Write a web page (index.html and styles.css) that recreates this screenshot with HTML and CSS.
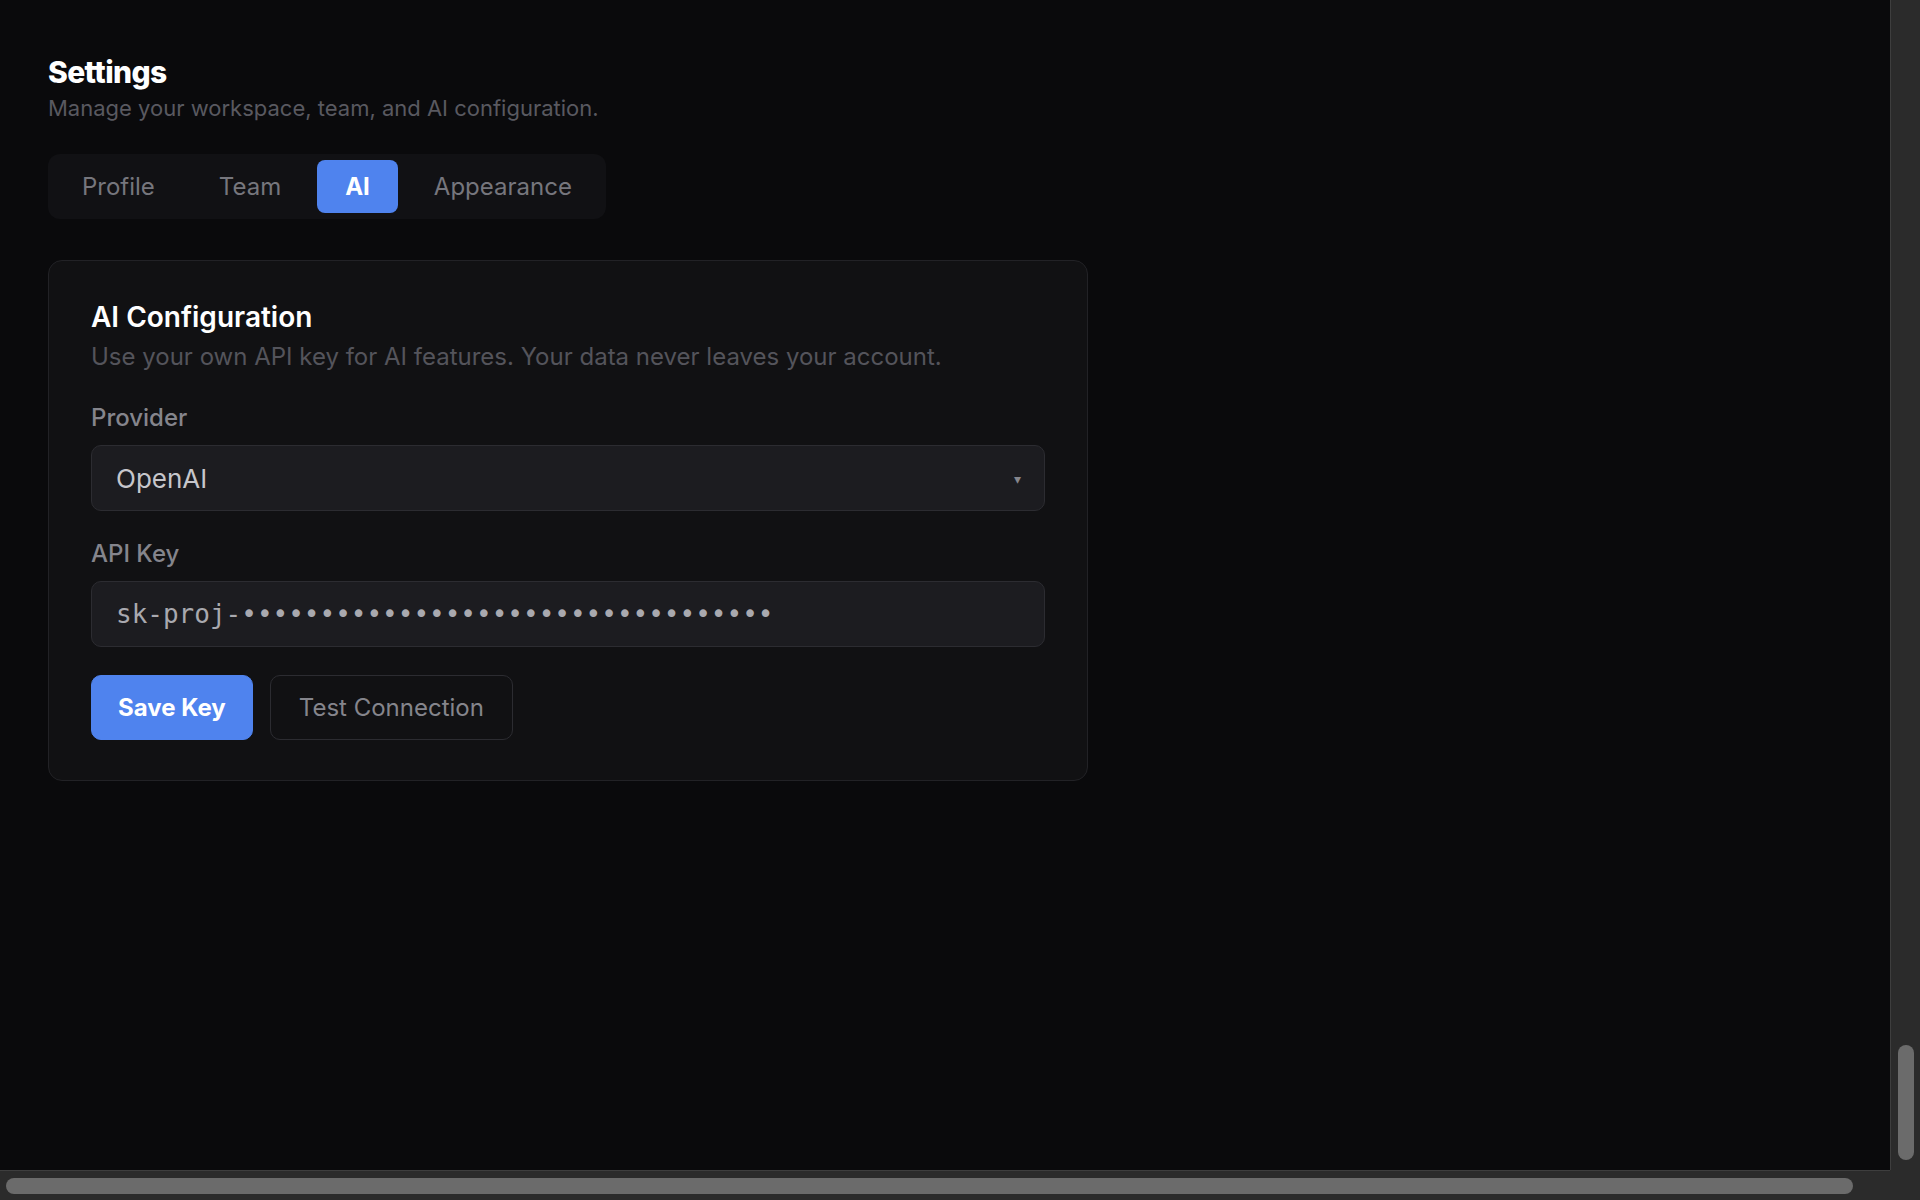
FILE: index.html
```html
<!DOCTYPE html>
<html lang="en">
<head>
    <meta charset="utf-8">
    <title>Settings</title>
    <link rel="stylesheet" href="styles.css">
</head>
<body>
    <div class="window">
        <main class="settings">
            <h1 class="page-title">Settings</h1>
            <p class="page-sub">Manage your workspace, team, and AI configuration.</p>

            <nav class="tabs">
                <button class="tab">Profile</button>
                <button class="tab">Team</button>
                <button class="tab active">AI</button>
                <button class="tab">Appearance</button>
            </nav>

            <section class="card">
                <h2 class="card-title">AI Configuration</h2>
                <p class="card-desc">Use your own API key for AI features. Your data never leaves your account.</p>

                <label class="field-label" for="provider">Provider</label>
                <div class="select-wrap">
                    <select id="provider" class="field">
                        <option>OpenAI</option>
                        <option>Anthropic</option>
                    </select>
                    <span class="caret">&#9662;</span>
                </div>

                <label class="field-label" for="apikey">API Key</label>
                <input id="apikey" class="field mono" type="text" value="sk-proj-••••••••••••••••••••••••••••••••••">

                <div class="actions">
                    <button class="btn primary">Save Key</button>
                    <button class="btn ghost">Test Connection</button>
                </div>
            </section>
        </main>

        <div class="scrollbar vertical">
            <div class="thumb"></div>
        </div>
        <div class="scrollbar horizontal">
            <div class="thumb"></div>
        </div>
        <div class="scroll-corner"></div>
    </div>
</body>
</html>
```

FILE: styles.css
```css
html {
    background: #0a0a0c;
}
body {
    margin: 0;
    font-family: Inter, "Noto Sans", sans-serif;
    color: #fff;
}

.window {
    display: grid;
    grid-template-columns: 1fr 30px;
    grid-template-rows: 1fr 30px;
    height: 100vh;
    overflow: hidden;
}

/* scrollbars */
.scrollbar,
.scroll-corner {
    box-sizing: border-box;
    background: #2b2b2b;
}
.scrollbar.vertical {
    display: flex;
    flex-direction: column;
    justify-content: flex-end;
    border-left: 1px solid #3e3e3e;
    padding: 10px 6px 10px 7px;
}
.scrollbar.vertical .thumb {
    height: 115px;
}
.scrollbar.horizontal {
    border-top: 1px solid #3e3e3e;
    padding: 7px 37px 6px 6px;
}
.scrollbar.horizontal .thumb {
    height: 16px;
}
.thumb {
    background: #6b6b6b;
    border-radius: 8px;
}

.settings {
    min-width: 0;
    padding: 54px 48px 0;
    overflow: hidden;
}

.page-title {
    margin: 0;
    font-size: 30px;
    line-height: 36px;
    font-weight: 800;
    letter-spacing: -0.6px;
    color: #fff;
}
.page-sub {
    margin: 3px 0 0;
    font-size: 22px;
    line-height: 31px;
    color: #595960;
}

.tabs {
    display: inline-flex;
    gap: 8px;
    margin-top: 30px;
    padding: 6px;
    background: #111114;
    border-radius: 12px;
}
.tab {
    padding: 12px 28px;
    border: none;
    border-radius: 8px;
    background: transparent;
    font-family: inherit;
    font-size: 24px;
    line-height: 29px;
    color: #76767d;
}
.tab.active {
    background: #4f83ee;
    color: #fff;
    font-weight: 700;
}

.card {
    box-sizing: border-box;
    width: 1040px;
    margin-top: 41px;
    padding: 39px 42px 40px;
    background: #111113;
    border: 1px solid #222226;
    border-radius: 14px;
}
.card-title {
    margin: 0;
    font-size: 28px;
    line-height: 35px;
    font-weight: 600;
    color: #fff;
}
.card-desc {
    margin: 6px 0 0;
    font-size: 24px;
    line-height: 31px;
    color: #54545b;
}

.field-label {
    display: block;
    margin-top: 30px;
    font-size: 24px;
    line-height: 32px;
    font-weight: 500;
    color: #85858c;
}
.field-label + .select-wrap,
.field-label + .field {
    margin-top: 11px;
}
.select-wrap + .field-label {
    margin-top: 27px;
}

.select-wrap {
    position: relative;
}
.field {
    display: block;
    box-sizing: border-box;
    width: 100%;
    height: 66px;
    padding: 0 24px;
    background: #1c1c20;
    border: 1px solid #2c2c31;
    border-radius: 10px;
    font-family: inherit;
    font-size: 26px;
    color: #c6c6cb;
    outline: none;
}
select.field {
    appearance: none;
    -webkit-appearance: none;
}
.caret {
    position: absolute;
    right: 24px;
    top: 50%;
    transform: translateY(-50%);
    font-size: 14px;
    color: #85858c;
    pointer-events: none;
}
.field.mono {
    font-family: "DejaVu Sans Mono", monospace;
    font-size: 26px;
    color: #a9a9af;
}

.actions {
    display: flex;
    gap: 17px;
    margin-top: 28px;
}
.btn {
    height: 65px;
    padding: 0 28px;
    border: 1px solid transparent;
    border-radius: 10px;
    font-family: inherit;
    font-size: 24px;
}
.btn.primary {
    padding: 0 26px;
    background: #4f83ee;
    border-color: #4f83ee;
    color: #fff;
    font-weight: 700;
}
.btn.ghost {
    background: transparent;
    border-color: #2c2c31;
    color: #85858c;
}
```
